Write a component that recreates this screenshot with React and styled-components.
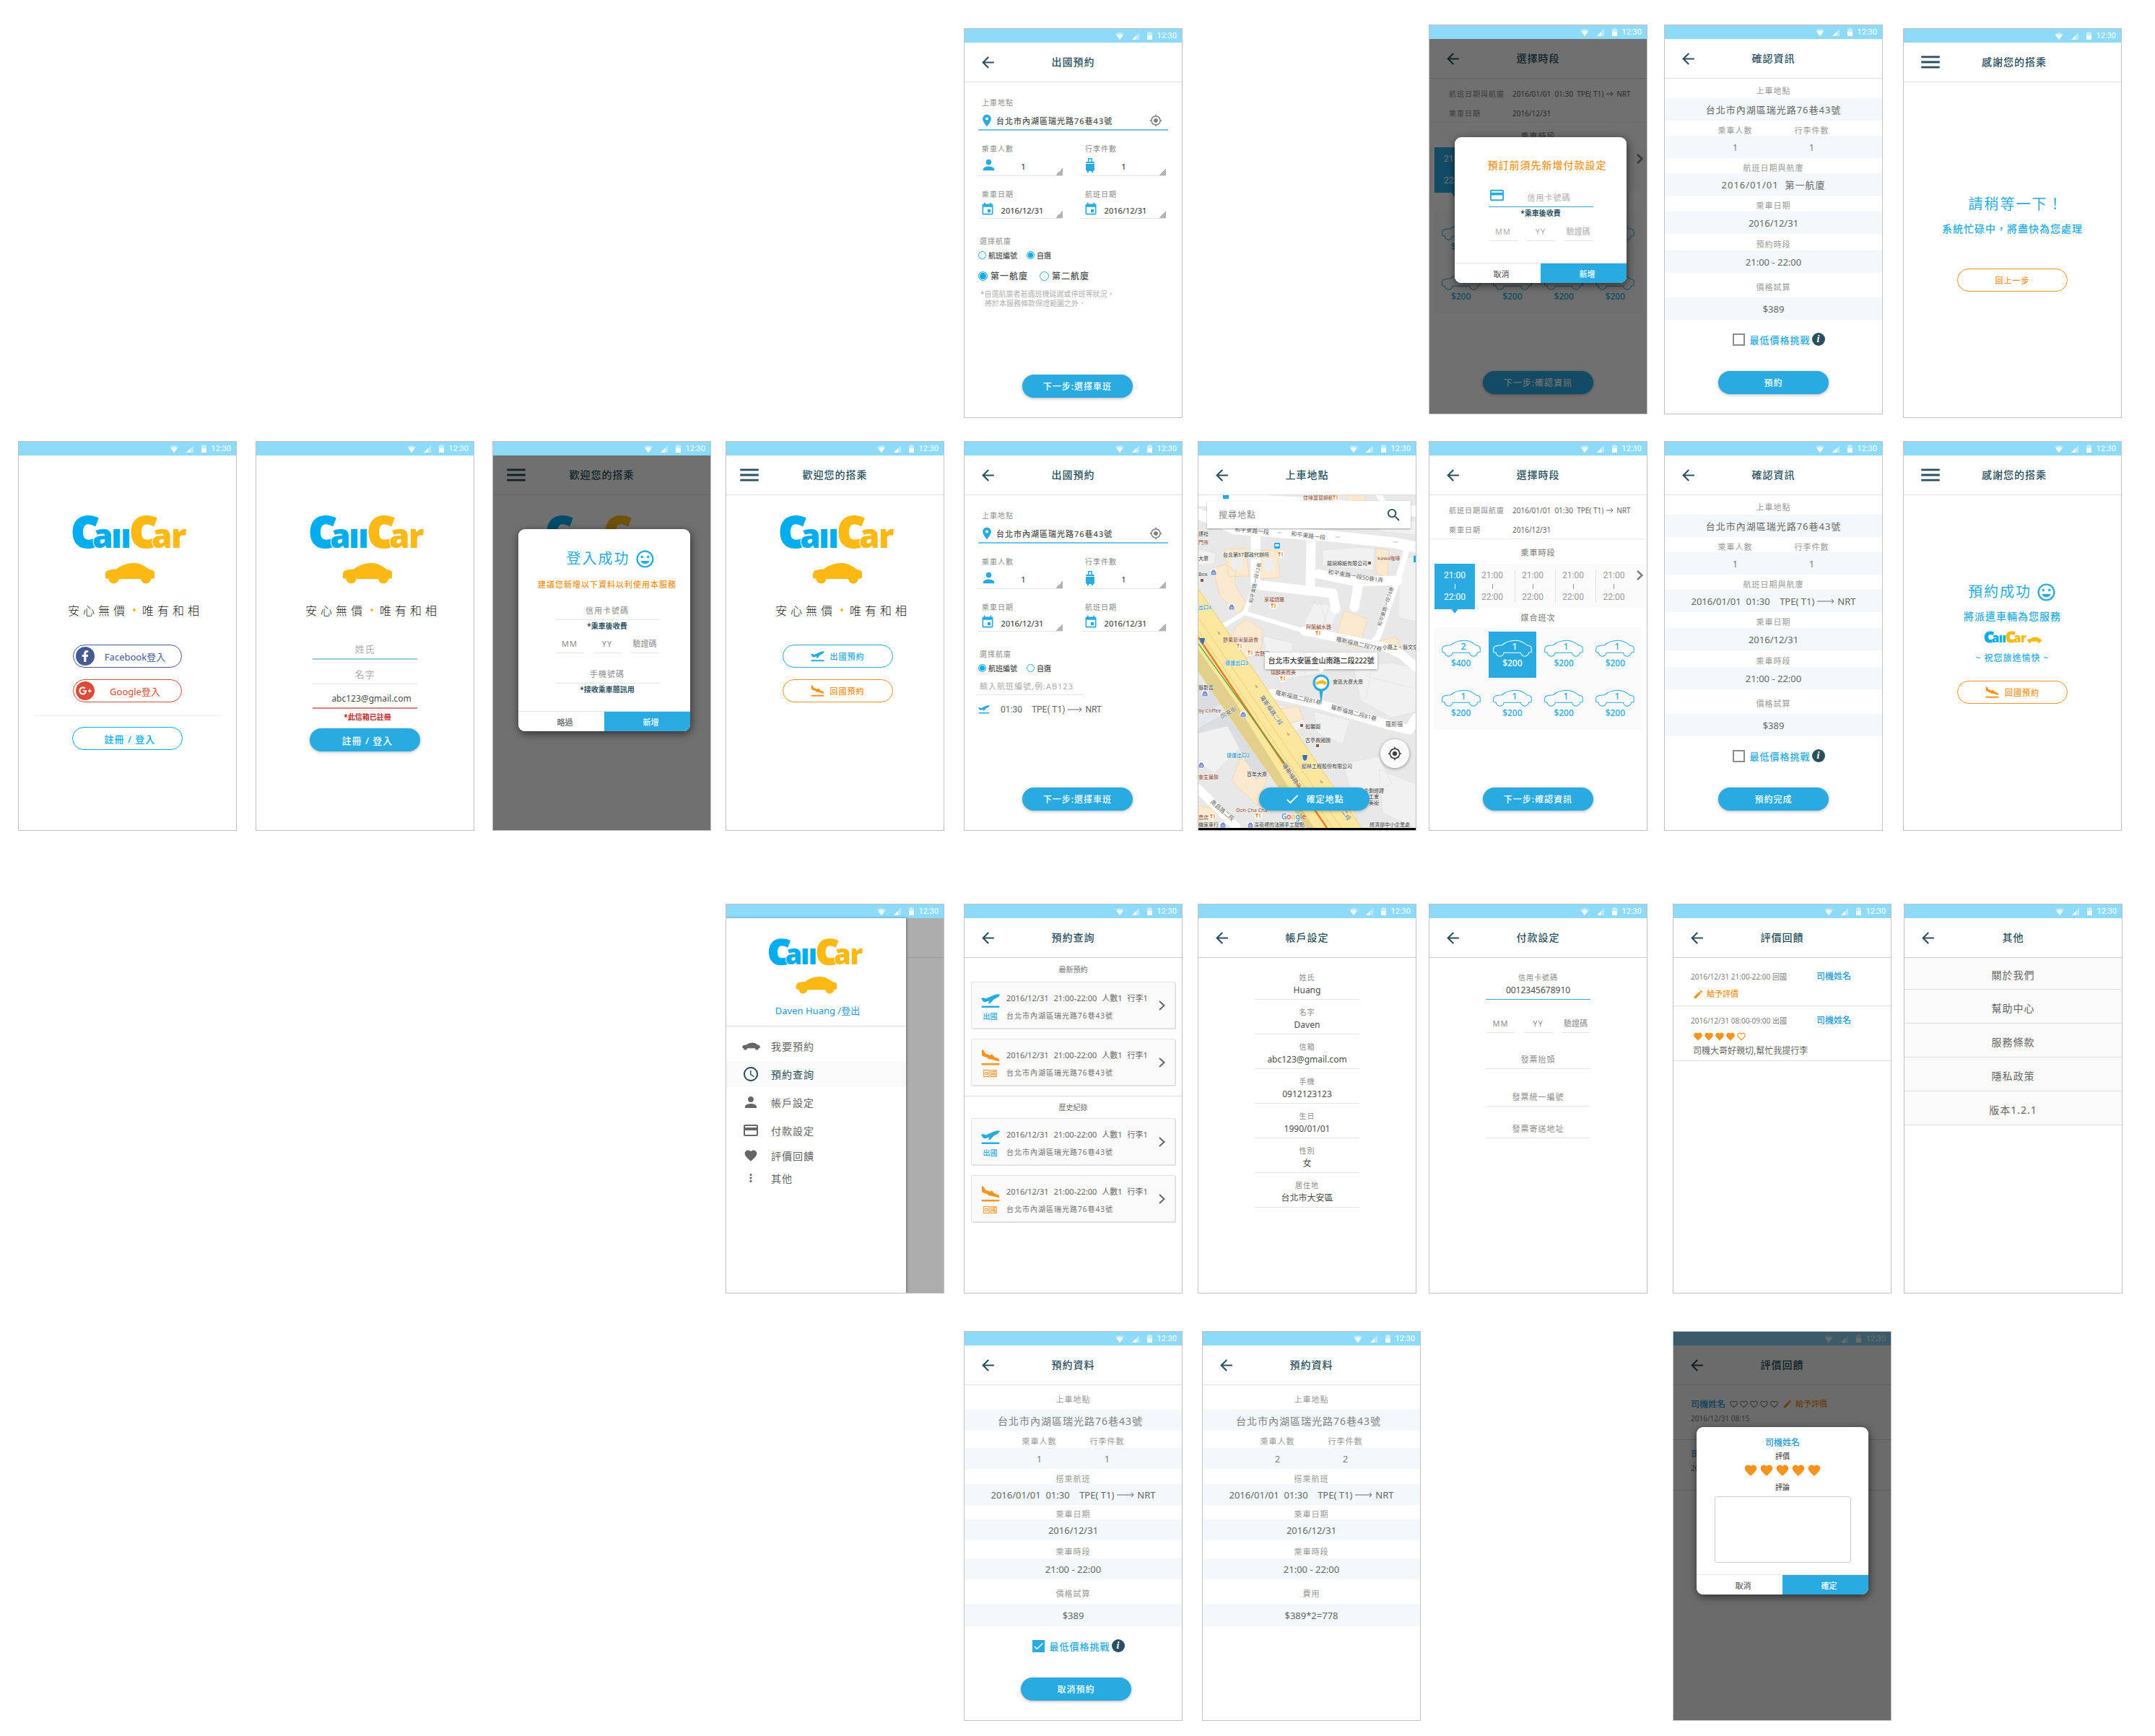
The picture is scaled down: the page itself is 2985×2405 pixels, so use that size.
import React, { useId } from "react";
import styled, { createGlobalStyle, css } from "styled-components";
import {
  MdArrowBack, MdMenu, MdPlace, MdGpsFixed, MdPerson, MdEvent,
  MdCreditCard, MdAccessTime, MdFavorite, MdFavoriteBorder, MdMoreVert, MdEdit, MdSearch,
  MdCheck, MdTagFaces,
} from "react-icons/md";
import { FaFacebookF, FaGooglePlusG } from "react-icons/fa";

const c = {
  blue: "#29abe2", sky: "#8edaf9", logoBlue: "#00aeef", yellow: "#fdb913", orange: "#f7931e",
  navy: "#2a4f60", text: "#4d4d4d", mid: "#666666", label: "#8c8c8c", hint: "#adadad",
  line: "#e4e4e4", frame: "#c2c2c2", band: "#f2f8fb", panel: "#fafafa", link: "#1c9ad6",
};

const Global = createGlobalStyle`
  *, *::before, *::after { box-sizing: border-box; }
  body { margin: 0; background: #ffffff; }
  body, button, input, select, textarea {
    font-family: "Noto Sans", "Noto Sans CJK TC", sans-serif;
    font-size: 12px;
    color: ${c.text};
  }
  button, input, select, textarea { margin: 0; padding: 0; border: 0; background: none; outline: 0; border-radius: 0; }
  button { cursor: pointer; }
  h1, h2, p, ul { margin: 0; padding: 0; font-weight: 400; }
  ul { list-style: none; }
  svg { display: block; flex: none; }
`;

/* ---------- board ---------- */

const Board = styled.main`
  display: flex;
  flex-direction: column;
  padding: 34px 45px 22px 25px;
`;
const Lane = styled.section`
  display: grid;
  grid-template-columns: ${(p) => p.$tracks.map((t) => `minmax(0, ${t}fr)`).join(" ")};
  align-items: start;
  min-height: ${(p) => p.$height}px;
`;
const Phone = styled.article`
  position: relative;
  grid-column: ${(p) => p.$col};
  grid-row: 1;
  display: flex;
  flex-direction: column;
  width: 303px;
  height: 540px;
  margin-top: ${(p) => (p.$low ? 5 : 0)}px;
  border: 1px solid ${c.frame};
  background: #ffffff;
  overflow: hidden;
`;
const Bar = styled.div`
  flex: none;
  display: flex;
  align-items: center;
  justify-content: flex-end;
  gap: 11px;
  height: 19px;
  padding-right: 7px;
  background: ${c.sky};
  color: #ffffff;
  font: 11px/19px Roboto, sans-serif;
`;
const Clock = styled.span`margin-left: -4px;`;
const Header = styled.header`
  flex: none;
  display: grid;
  grid-template-columns: 52px 1fr 52px;
  align-items: center;
  height: 55px;
  padding-left: ${(p) => (p.$inset ? 5 : 0)}px;
  border-bottom: 1px solid ${(p) => (p.$strong ? "#c8c8c8" : "#e0e0e0")};
  color: ${c.navy};
`;
const Nav = styled.button`
  display: flex;
  justify-content: flex-end;
  padding-right: ${(p) => (p.$menu ? 3 : 7)}px;
  color: inherit;
`;
const Title = styled.h1`
  text-align: center;
  font-size: 14px;
  line-height: 20px;
  font-weight: 500;
  letter-spacing: 1px;
`;
const Body = styled.div`
  flex: 1;
  display: flex;
  flex-direction: column;
  padding: 0 ${(p) => p.$x || 0}px;
`;
const Center = styled.div`
  display: flex;
  flex-direction: column;
  align-items: center;
  padding-top: ${(p) => p.$top || 0}px;
  padding-left: ${(p) => p.$left || 0}px;
`;
const Footer = styled.footer`
  margin-top: auto;
  display: flex;
  justify-content: center;
  padding-bottom: 27px;
  padding-left: ${(p) => p.$left || 0}px;
`;

const Status = () => (
  <Bar>
    <svg width="12" height="10" viewBox="0 0 12 10" fill="currentColor">
      <path d="M0 2Q6-2 12 2L6 10Z" opacity=".4" /><path d="M1.6 4.2Q6 1.4 10.4 4.2L6 10Z" />
    </svg>
    <svg width="10" height="10" viewBox="0 0 10 10" fill="currentColor">
      <path d="M0 10L10 0V10Z" opacity=".4" /><path d="M0 10L6 4V10Z" />
    </svg>
    <svg width="7" height="11" viewBox="0 0 7 11" fill="currentColor">
      <path d="M2 0H5V1H7V5H0V1H2Z" opacity=".5" /><path d="M0 5H7V11H0Z" />
    </svg>
    <Clock>12:30</Clock>
  </Bar>
);

function Screen({ col, low, title, menu, strong, inset, children, overlay }) {
  return (
    <Phone $col={col} $low={low}>
      <Status />
      {title && (
        <Header $strong={strong} $inset={inset}>
          <Nav $menu={menu} aria-label={menu ? "選單" : "返回"}>
            {menu ? <MdMenu size={34} /> : <MdArrowBack size={25} />}
          </Nav>
          <Title>{title}</Title>
        </Header>
      )}
      {children}
      {overlay}
    </Phone>
  );
}

/* ---------- shared parts ---------- */

const Pill = styled.button`
  display: flex;
  align-items: center;
  justify-content: center;
  gap: ${(p) => p.$gap || 8}px;
  width: 153px;
  height: 32px;
  padding-left: ${(p) => (p.$size === 13 ? 7 : 0)}px;
  border-radius: 16px;
  font-size: ${(p) => p.$size || 12}px;
  font-weight: 500;
  letter-spacing: 1px;
  ${(p) => p.$line
    ? css`border: 1px solid ${p.$line}; color: ${p.$line}; background: #ffffff;`
    : css`background: ${c.blue}; color: #ffffff; box-shadow: 0 1px 4px rgba(0, 0, 0, 0.3);`}
`;

const Takeoff = ({ width }) => (
  <svg width={width} height={Math.round((width * 20) / 26)} viewBox="0 0 26 20" fill="currentColor">
    <path d="M0 6L3 5L6.500 6.500L18 1.500Q23-.5 26 .5Q25 4 20.500 6L17.500 7.500L12.500 13H10L11.500 9.500L5.500 11.300Q3.500 11.500 2.500 10Z" />
    <rect x=".5" y="16.500" width="25" height="2.600" rx="1" />
  </svg>
);
const Landing = ({ width }) => (
  <svg width={width} height={Math.round((width * 22) / 26)} viewBox="0 0 26 22" fill="currentColor">
    <path d="M1 0L3.500 1L6 5.500L13 8L13.500 6.500L16 7.500L18.500 10.500L23 12Q26 13.500 25 16.500L14 13.500L10.500 13.500L9 11.500L2 9Q.8 8 .9 6Z" />
    <rect x=".5" y="19" width="25" height="2.600" rx="1" />
  </svg>
);

const CAR = "M3 12Q6 10 16 9.5Q26 1 41 1Q51 1 62 10Q69 10.500 69 15L69 22L64 23A7 6.500 0 0 1 50 23L19.500 23A7 6.500 0 0 1 5.500 23L1 22Q0 14 3 12Z";
const Car = ({ width, color }) => (
  <svg width={width} height={Math.round(width * 0.43)} viewBox="0 0 70 30" fill={color}><path d={CAR} /></svg>
);

const LogoSvg = styled.svg`overflow: visible;`;
const LogoText = styled.text`
  font-family: "Noto Sans", "Open Sans", sans-serif;
  font-weight: 900;
  font-size: ${(p) => (p.$cap ? 58 : 46)}px;
  paint-order: stroke;
  stroke: ${(p) => p.$edge || "#ffffff"};
  stroke-width: ${(p) => (p.$edge ? 3 : 2)}px;
`;
const Logo = ({ width }) => (
  <LogoSvg width={width} height={Math.round((width * 46) / 158)} viewBox="0 0 158 46" role="img" aria-label="CallCar">
    <g fill={c.logoBlue}>
      <LogoText x="-2" y="43" $cap $edge={c.logoBlue}>C</LogoText>
      <LogoText x="27" y="44">a</LogoText>
      <LogoText x="53" y="44">ı</LogoText>
      <LogoText x="66" y="44">ı</LogoText>
    </g>
    <g fill={c.yellow}>
      <LogoText x="79" y="43" $cap $edge={c.yellow}>C</LogoText>
      <LogoText x="109" y="44">a</LogoText>
      <LogoText x="136" y="44">r</LogoText>
    </g>
  </LogoSvg>
);

const BrandBox = styled.div`
  display: flex;
  flex-direction: column;
  align-items: center;
  padding: ${(p) => p.$top}px 0 0 7px;
`;
const BrandCar = styled.div`margin-top: 18px;`;
const Tagline = styled.p`
  display: flex;
  align-items: center;
  gap: 6px;
  margin-top: 24px;
  padding-left: 15px;
  font-family: "Noto Sans CJK TC", sans-serif;
  font-size: 16px;
  line-height: 24px;
  font-weight: 300;
  letter-spacing: 5px;
  color: #1a1a1a;
`;
const Dot = styled.i`
  width: 4px;
  height: 4px;
  margin-right: 3px;
  border-radius: 2px;
  background: ${c.yellow};
`;
const Brand = ({ top }) => (
  <BrandBox $top={top}>
    <Logo width={158} />
    <BrandCar><Car width={70} color={c.yellow} /></BrandCar>
    <Tagline><span>安心無價</span><Dot /><span>唯有和相</span></Tagline>
  </BrandBox>
);

const Shade = styled.div`
  position: absolute;
  inset: ${(p) => (p.$full ? 0 : 19)}px 0 0 0;
  padding: ${(p) => p.$top}px 0 0 ${(p) => p.$left || 35}px;
  background: rgba(0, 0, 0, ${(p) => (p.$full ? 0.58 : 0.56)});
`;
const Dialog = styled.div`
  display: flex;
  flex-direction: column;
  width: 238px;
  height: ${(p) => p.$height}px;
  border-radius: 9px;
  background: #ffffff;
  box-shadow: 1px 3px 12px rgba(0, 0, 0, 0.6);
  overflow: hidden;
`;
const DialogBody = styled.div`
  flex: 1;
  display: flex;
  flex-direction: column;
  align-items: center;
  padding-left: ${(p) => p.$left || 0}px;
`;
const DialogFoot = styled.div`
  display: grid;
  grid-template-columns: 1fr 1fr;
  height: 28px;
  border-top: 1px solid ${c.line};
`;
const Choice = styled.button`
  padding-left: 10px;
  font-size: 11px;
  font-weight: 500;
  color: ${(p) => (p.$main ? "#ffffff" : c.mid)};
  background: ${(p) => (p.$main ? c.blue : "#ffffff")};
`;
const Warn = styled.h2`
  margin-top: ${(p) => p.$top}px;
  padding-left: ${(p) => p.$left || 0}px;
  white-space: nowrap;
  font-size: ${(p) => p.$size}px;
  line-height: 20px;
  font-weight: 500;
  letter-spacing: 1px;
  color: ${c.orange};
`;
const Note = styled.p`
  font-size: 10px;
  line-height: 16px;
  font-weight: 700;
  color: ${c.navy};
`;
const Field = styled.label`
  display: flex;
  align-items: flex-end;
  width: ${(p) => p.$w || 145}px;
  height: ${(p) => p.$h || 24}px;
  margin-top: ${(p) => p.$top || 0}px;
  padding-bottom: 4px;
  border-bottom: ${(p) => p.$thick || 1}px solid ${(p) => p.$line || c.line};
  color: ${c.blue};
`;
const Input = styled.input`
  flex: 1;
  width: 100%;
  min-width: 0;
  height: 18px;
  padding-left: ${(p) => p.$left || 0}px;
  text-align: ${(p) => p.$align || "center"};
  font-size: ${(p) => p.$size || 11}px;
  letter-spacing: ${(p) => (p.$plain ? 0 : 1)}px;
  color: ${c.text};
  &::placeholder { color: ${(p) => (p.$pale ? c.hint : c.label)}; opacity: 1; }
`;
const Trio = styled.div`
  display: grid;
  grid-template-columns: 39px 39px 39px;
  justify-content: space-between;
  width: 143px;
  margin-top: ${(p) => p.$top}px;
`;
const CardTrio = ({ top, pale, h }) => (
  <Trio $top={top}>
    {["MM", "YY", "驗證碼"].map((t) => (
      <Field key={t} $w={39} $h={h}><Input aria-label={t} placeholder={t} $pale={pale} $plain={t.length > 2} /></Field>
    ))}
  </Trio>
);
const Big = styled.h2`
  display: flex;
  align-items: center;
  gap: 6px;
  padding-left: ${(p) => (p.$inset ? 10 : 0)}px;
  white-space: nowrap;
  font-size: 20px;
  line-height: 30px;
  letter-spacing: 2px;
  color: ${c.blue};
`;

/* ---------- booking form ---------- */

const Label = styled.span`
  display: block;
  margin-top: ${(p) => p.$top || 0}px;
  padding-left: ${(p) => (p.$flush ? 2 : 5)}px;
  font-size: 10px;
  line-height: 16px;
  letter-spacing: 1px;
  color: ${c.label};
`;
const Address = styled.label`
  display: flex;
  align-items: center;
  gap: 3px;
  height: 31px;
  padding: 4px 8px 0 2px;
  border-bottom: 2px solid #6fc3e8;
  color: ${c.blue};
`;
const AddressInput = styled(Input)`
  text-align: left;
  font-weight: 500;
`;
const Gps = styled.span`color: #808080;`;
const BlueIcon = styled.span`color: ${c.blue};`;
const Pair = styled.div`
  display: grid;
  grid-template-columns: 1fr 1fr;
  gap: 26px;
  padding-right: 3px;
`;
const Picker = styled.label`
  display: flex;
  align-items: center;
  height: ${(p) => p.$h}px;
  padding-left: ${(p) => p.$left || 3}px;
  border-bottom: 1px solid ${c.line};
  background: linear-gradient(135deg, transparent 50%, #b3b3b3 50%) right bottom / 10px 10px no-repeat;
  color: ${c.blue};
`;
const Select = styled.select`
  flex: 1;
  appearance: none;
  padding: 4px 18px 0 0;
  text-align-last: center;
  font-size: 11px;
  line-height: 18px;
  font-weight: 500;
`;
const Radios = styled.div`
  display: flex;
  align-items: center;
  gap: ${(p) => p.$gap}px;
  height: 20px;
  margin-top: ${(p) => p.$top}px;
`;
const RadioLabel = styled.label`
  display: flex;
  align-items: center;
  gap: ${(p) => (p.$big ? 4 : 3)}px;
  font-size: ${(p) => (p.$big ? 12 : 10)}px;
  font-weight: 500;
  letter-spacing: ${(p) => (p.$big ? 1 : 0)}px;
`;
const Radio = styled.input`
  appearance: none;
  width: ${(p) => (p.$big ? 13 : 11)}px;
  height: ${(p) => (p.$big ? 13 : 11)}px;
  border: 1px solid ${c.blue};
  border-radius: 50%;
  &:checked { background: ${c.logoBlue}; box-shadow: inset 0 0 0 1px #ffffff; }
`;
const Small = styled.p`
  margin-top: 9px;
  padding-left: 9px;
  text-indent: -6px;
  font-size: 10px;
  line-height: 13px;
  color: #b0b0b0;
`;
const SmallNext = styled.span`display: block; text-indent: 0;`;
const Flight = styled.div`
  display: flex;
  align-items: center;
  height: 20px;
  margin-top: 10px;
  font-family: Roboto, sans-serif;
  font-size: 12px;
  color: ${c.mid};
`;
const FlightTime = styled.span`padding: 0 13px 0 15px;`;
const Route = styled.span`
  display: inline-flex;
  align-items: center;
  gap: 4px;
  white-space: nowrap;
`;
const Arrow = ({ w = 20 }) => (
  <svg width={w} height="8" viewBox={`0 0 ${w} 8`} fill="none" stroke="currentColor"><path d={`M0 4H${w - 1}M${w - 4} 1L${w - 1} 4L${w - 4} 7`} /></svg>
);
const FlightInput = styled(Input)`
  flex: none;
  width: 148px;
  height: 21px;
  margin: 7px 0 0 -3px;
  padding: 0 0 3px 5px;
  text-align: left;
  border-bottom: 1px solid ${c.line};
`;
const Suitcase = () => (
  <svg width="12" height="20" viewBox="0 0 12 20" fill="currentColor">
    <path d="M3 0H9V5H7.500V1.500H4.500V5H3Z" /><rect y="5" width="12" height="2" rx="1" />
    <path d="M0 8H12V16Q12 18 10 18H2Q0 18 0 16Z" /><path d="M2 18H4V20H2ZM8 18H10V20H8Z" />
  </svg>
);

function BookingForm({ custom }) {
  const id = useId();
  return (
    <Body $x={19}>
      <Label $top={20}>上車地點</Label>
      <Address>
        <MdPlace size={20} />
        <AddressInput aria-label="上車地點" defaultValue="台北市內湖區瑞光路76巷43號" />
        <Gps><MdGpsFixed size={18} /></Gps>
      </Address>
      <Pair>
        <div>
          <Label $top={17}>乘車人數</Label>
          <Picker $h={30}><MdPerson size={23} /><Select aria-label="乘車人數"><option>1</option></Select></Picker>
        </div>
        <div>
          <Label $top={17}>行李件數</Label>
          <Picker $h={30} $left={6}><Suitcase /><Select aria-label="行李件數"><option>1</option></Select></Picker>
        </div>
      </Pair>
      <Pair>
        <div>
          <Label $top={17}>乘車日期</Label>
          <Picker $h={26}><MdEvent size={20} /><Select aria-label="乘車日期"><option>2016/12/31</option></Select></Picker>
        </div>
        <div>
          <Label $top={17}>航班日期</Label>
          <Picker $h={26}><MdEvent size={20} /><Select aria-label="航班日期"><option>2016/12/31</option></Select></Picker>
        </div>
      </Pair>
      <Label $top={23} $flush>選擇航廈</Label>
      <Radios $top={1} $gap={13}>
        <RadioLabel><Radio type="radio" name={`${id}a`} defaultChecked={!custom} />航班編號</RadioLabel>
        <RadioLabel><Radio type="radio" name={`${id}a`} defaultChecked={custom} />自選</RadioLabel>
      </Radios>
      {custom ? (
        <>
          <Radios $top={9} $gap={16}>
            <RadioLabel $big><Radio $big type="radio" name={`${id}b`} defaultChecked />第一航廈</RadioLabel>
            <RadioLabel $big><Radio $big type="radio" name={`${id}b`} />第二航廈</RadioLabel>
          </Radios>
          <Small>*自選航廈者若遇班機延遲或停班等狀況，<SmallNext>將於本服務條款保證範圍之外．</SmallNext></Small>
        </>
      ) : (
        <>
          <FlightInput aria-label="航班編號" placeholder="輸入航班編號,例:AB123" $pale />
          <Flight>
            <BlueIcon><Takeoff width={16} /></BlueIcon>
            <FlightTime>01:30</FlightTime>
            <Route>TPE( T1)<Arrow />NRT</Route>
          </Flight>
        </>
      )}
      <Footer $left={12}><Pill>下一步:選擇車班</Pill></Footer>
    </Body>
  );
}

/* ---------- slots ---------- */

const Facts = styled.dl`
  display: grid;
  grid-template-columns: 88px 1fr;
  row-gap: 7px;
  height: 61px;
  margin: 0;
  padding: 13px 0 0 27px;
  border-bottom: 1px solid #eeeeee;
  font-size: 10px;
  line-height: 16px;
`;
const FactName = styled.dt`letter-spacing: 1px; color: ${c.label};`;
const FactValue = styled.dd`margin: 0; color: ${c.mid};`;
const Section = styled.h2`
  height: ${(p) => p.$h}px;
  padding-top: ${(p) => p.$pad || 0}px;
  text-align: center;
  font-size: 11px;
  line-height: ${(p) => p.$h - (p.$pad || 0)}px;
  font-weight: 500;
  letter-spacing: 1px;
  color: ${c.label};
`;
const Strip = styled.div`
  display: grid;
  grid-template-columns: repeat(5, 56px) 1fr;
  height: 61px;
  padding-left: 7px;
  background: ${c.panel};
`;
const Slot = styled.button`
  position: relative;
  display: flex;
  flex-direction: column;
  align-items: center;
  justify-content: center;
  margin: ${(p) => (p.$on ? 0 : 9)}px 0;
  padding-right: ${(p) => (p.$on ? 0 : 7)}px;
  border-right: ${(p) => (p.$edge ? 1 : 0)}px solid ${c.line};
  background: ${(p) => (p.$on ? c.blue : "transparent")};
  color: ${(p) => (p.$on ? "#ffffff" : "#999999")};
  font-family: Roboto, sans-serif;
  font-size: 12px;
  line-height: 15px;
  &::after {
    content: "";
    display: ${(p) => (p.$on ? "block" : "none")};
    position: absolute;
    top: 61px;
    border: solid transparent;
    border-width: 8px 6px 0;
    border-top-color: ${c.blue};
  }
`;
const Tick = styled.i`width: 1px; height: 7px; margin: 4px 0; background: currentColor;`;
const More = styled.button`
  display: flex;
  align-items: flex-start;
  justify-content: flex-start;
  padding-top: 9px;
  color: #808080;
`;
const Chevron = ({ w = 9, s = 2.5 }) => (
  <svg width={w} height="14" viewBox="0 0 9 14" fill="none" stroke="currentColor" strokeWidth={s}><path d="M1 1L7.500 7L1 13" /></svg>
);
const Cars = styled.div`
  display: grid;
  grid-template-columns: repeat(4, 1fr);
  grid-auto-rows: 64px;
  gap: 5px 6px;
  height: 142px;
  margin: 0 7px;
  padding: 6px 4px 0;
  background: ${c.panel};
`;
const CarCell = styled.button`
  display: flex;
  flex-direction: column;
  align-items: center;
  padding-top: 11px;
  font-size: 12px;
  line-height: 18px;
  font-weight: 500;
  color: ${(p) => (p.$on ? "#ffffff" : c.blue)};
  background: ${(p) => (p.$on ? c.blue : "transparent")};
`;
const SvgLabel = styled.text`
  font-family: "Noto Sans", sans-serif;
  font-weight: 500;
  font-size: 16px;
  fill: currentColor;
`;
const cars = [["2", "$400", false], ["1", "$200", true], ["1", "$200"], ["1", "$200"], ["1", "$200"], ["1", "$200"], ["1", "$200"], ["1", "$200"]];

const Slots = () => (
  <Body>
    <Facts>
      <FactName>航班日期與航廈</FactName>
      <FactValue><Route>2016/01/01&nbsp; 01:30&nbsp; TPE( T1) <Arrow w={10} /> NRT</Route></FactValue>
      <FactName>乘車日期</FactName><FactValue>2016/12/31</FactValue>
    </Facts>
    <Section $h={34} $pad={4}>乘車時段</Section>
    <Strip>
      {[0, 1, 2, 3, 4].map((i) => (
        <Slot key={i} $on={i === 0} $edge={i > 0 && i < 4}>21:00<Tick />22:00</Slot>
      ))}
      <More aria-label="更多時段"><Chevron /></More>
    </Strip>
    <Section $h={27}>媒合班次</Section>
    <Cars>
      {cars.map(([n, price, on], i) => (
        <CarCell key={i} $on={on}>
          <svg width="54" height="24" viewBox="0 0 70 30" fill="none" stroke="currentColor" strokeWidth="1.3">
            <path d={CAR} /><SvgLabel x="39" y="18" textAnchor="middle" stroke="none">{n}</SvgLabel>
          </svg>
          {price}
        </CarCell>
      ))}
    </Cars>
    <Footer><Pill>下一步:確認資訊</Pill></Footer>
  </Body>
);

/* ---------- booking summary ---------- */

const SumLabel = styled.div`
  display: flex;
  justify-content: center;
  align-items: center;
  height: ${(p) => p.$h}px;
  padding-top: 4px;
  font-size: 11px;
  letter-spacing: 1px;
  color: #999999;
`;
const SumBand = styled.div`
  display: flex;
  justify-content: center;
  align-items: center;
  height: ${(p) => p.$h}px;
  padding-right: ${(p) => (p.$large ? 8 : 0)}px;
  background: ${c.band};
  font-size: ${(p) => (p.$large ? 14 : 13)}px;
  letter-spacing: ${(p) => (p.$wide ? 1 : 0)}px;
  color: ${(p) => (p.$soft ? "#808080" : c.mid)};
  white-space: pre;
`;
const Half = styled.span`
  width: ${(p) => p.$w}px;
  text-align: center;
`;
const Challenge = styled.div`
  display: flex;
  align-items: center;
  justify-content: center;
  gap: 6px;
  height: 20px;
  margin: 17px 0 0 15px;
`;
const CheckLabel = styled.label`
  display: flex;
  align-items: center;
  gap: 6px;
  font-size: 13px;
  font-weight: 500;
  letter-spacing: 1px;
  color: ${c.blue};
`;
const Check = styled.input`
  appearance: none;
  width: 17px;
  height: 17px;
  border: 2px solid #8c8c8c;
  &:checked {
    border: 0;
    background: ${c.blue};
  }
`;
const CheckWrap = styled.span`display: grid; > * { grid-area: 1 / 1; } color: #ffffff;`;
const Info = styled.button`
  width: 18px;
  height: 18px;
  margin-left: -4px;
  border-radius: 50%;
  background: ${c.navy};
  color: #ffffff;
  font: italic 700 14px/18px "Liberation Serif", serif;
`;
const flightValue = <>2016/01/01  01:30    <Route>TPE( T1)<Arrow w={24} />NRT</Route></>;

function Summary({ heights, bandH, half, people = "1", flightLabel, flight, slotLabel, costLabel = "價格試算", cost = "$389", past, checked, action }) {
  const [a, b, d, e, f, g] = heights;
  return (
    <Body>
      <SumLabel $h={a}>上車地點</SumLabel>
      <SumBand $h={bandH} $wide $large={past} $soft={past}>台北市內湖區瑞光路76巷43號</SumBand>
      <SumLabel $h={b}><Half $w={half}>乘車人數</Half><Half $w={half}>行李件數</Half></SumLabel>
      <SumBand $h={bandH} $soft><Half $w={half}>{people}</Half><Half $w={half}>{people}</Half></SumBand>
      <SumLabel $h={d}>{flightLabel}</SumLabel>
      <SumBand $h={bandH} $wide={!!flight}>{flight || flightValue}</SumBand>
      <SumLabel $h={e}>乘車日期</SumLabel>
      <SumBand $h={bandH}>2016/12/31</SumBand>
      <SumLabel $h={f}>{slotLabel}</SumLabel>
      <SumBand $h={bandH}>21:00 - 22:00</SumBand>
      <SumLabel $h={g}>{costLabel}</SumLabel>
      <SumBand $h={31}>{cost}</SumBand>
      {action && (
        <>
          <Challenge>
            <CheckLabel>
              <CheckWrap><Check type="checkbox" defaultChecked={checked} />{checked && <MdCheck size={17} />}</CheckWrap>
              最低價格挑戰
            </CheckLabel>
            <Info aria-label="說明">i</Info>
          </Challenge>
          <Footer $left={past ? 8 : 0}><Pill>{action}</Pill></Footer>
        </>
      )}
    </Body>
  );
}
const confirmProps = { heights: [27, 21, 21, 22, 23, 34], bandH: 31, half: 106, flightLabel: "航班日期與航廈" };
const detailProps = { heights: [34, 24, 21, 20, 25, 34], bandH: 29, half: 94, flightLabel: "搭乘航班", slotLabel: "乘車時段", past: true };

/* ---------- messages ---------- */

const Line = styled.p`
  margin-top: ${(p) => p.$top}px;
  white-space: nowrap;
  font-size: ${(p) => p.$size}px;
  line-height: 20px;
  font-weight: 500;
  letter-spacing: 1px;
  color: ${c.blue};
`;
const Gap = styled.div`margin-top: ${(p) => p.$h}px;`;
const MiniLogo = styled.div`
  display: flex;
  align-items: flex-end;
  margin-top: 10px;
`;

/* ---------- login ---------- */

const Social = styled.button`
  display: grid;
  grid-template-columns: 26px 1fr 8px;
  align-items: center;
  width: 151px;
  height: 32px;
  margin-top: ${(p) => p.$top}px;
  padding-left: 3px;
  border: 1px solid ${(p) => p.$tone};
  border-radius: 16px;
  color: ${(p) => p.$tone};
  font-size: 13px;
`;
const Badge = styled.span`
  display: grid;
  place-items: center;
  width: 26px;
  height: 26px;
  border-radius: 50%;
  background: ${(p) => p.$tone};
  color: #ffffff;
`;
const Rule = styled.hr`
  width: 258px;
  height: 1px;
  margin: 18px 0 15px;
  border: 0;
  background: #eeeeee;
`;
const ErrorText = styled.p`
  margin: 3px 0 8px;
  padding-left: 7px;
  font-size: 10px;
  line-height: 16px;
  font-weight: 700;
  color: #c1272d;
`;

/* ---------- drawer ---------- */

const DrawerArea = styled.div`
  flex: 1;
  background: #adadad linear-gradient(#999999, #999999) 0 54px / 100% 1px no-repeat;
`;
const Drawer = styled.nav`
  width: 249px;
  height: 100%;
  background: #ffffff;
  box-shadow: 1px 0 3px rgba(0, 0, 0, 0.4);
`;
const DrawerTop = styled.div`
  display: flex;
  flex-direction: column;
  align-items: center;
  height: 150px;
  padding-top: 28px;
  border-bottom: 1px solid #d9d9d9;
`;
const Account = styled.a`
  margin-top: 13px;
  padding-left: 4px;
  font-size: 13px;
  line-height: 20px;
  text-decoration: none;
  color: ${c.link};
`;
const Menu = styled.ul`
  display: flex;
  flex-direction: column;
  gap: 3px;
  padding-top: 9px;
`;
const MenuLink = styled.a`
  display: flex;
  align-items: center;
  gap: 15px;
  height: ${(p) => p.$h}px;
  padding-left: 21px;
  background: ${(p) => (p.$on ? c.panel : "transparent")};
  color: ${(p) => (p.$on ? c.navy : c.mid)};
  font-size: 14px;
  letter-spacing: 1px;
  text-decoration: none;
`;
const IconSlot = styled.span`display: grid; place-items: center; width: 26px;`;
const menuItems = [
  ["我要預約", <Car width={25} color="#666666" />, 36],
  ["預約查詢", <MdAccessTime size={24} />, 36, true],
  ["帳戶設定", <MdPerson size={24} />, 36],
  ["付款設定", <MdCreditCard size={24} />, 36],
  ["評價回饋", <MdFavorite size={20} />, 28],
  ["其他", <MdMoreVert size={18} />, 28],
];

/* ---------- booking list ---------- */

const Caption = styled.h2`
  text-align: center;
  font-size: 10px;
  line-height: ${(p) => p.$h}px;
  color: #737373;
  ${(p) => p.$ruled && css`margin-top: 14px; border-top: 1px solid #d9d9d9;`}
`;
const Trip = styled.a`
  display: grid;
  grid-template-columns: 48px 1fr 22px;
  align-items: center;
  height: 65px;
  margin: 0 9px ${(p) => (p.$last ? 0 : 14)}px 9px;
  border: 1px solid ${c.line};
  border-radius: 2px;
  background: ${c.panel};
  box-shadow: 1px 1px 1px rgba(0, 0, 0, 0.14);
  text-decoration: none;
  color: ${c.mid};
`;
const TripKind = styled.span`
  display: flex;
  flex-direction: column;
  align-items: center;
  justify-content: flex-end;
  gap: 4px;
  height: 44px;
  padding-left: 3px;
  font-size: 10px;
  line-height: 14px;
  font-weight: 500;
  color: ${(p) => (p.$out ? c.blue : c.orange)};
`;
const TripText = styled.span`
  display: grid;
  gap: 8px;
  padding-top: 4px;
  font-size: 11px;
  line-height: 16px;
  white-space: nowrap;
`;
const TripAddress = styled.span`font-size: 10px; letter-spacing: 1px; color: #737373;`;
const Meta = styled.span`display: flex; gap: 7px;`;
const TripCard = ({ out, last }) => (
  <Trip href="#trip" $last={last}>
    <TripKind $out={out}>{out ? <Takeoff width={26} /> : <Landing width={26} />}{out ? "出國" : "回國"}</TripKind>
    <TripText>
      <Meta><span>2016/12/31</span><span>21:00-22:00</span><span>人數1</span><span>行李1</span></Meta>
      <TripAddress>台北市內湖區瑞光路76巷43號</TripAddress>
    </TripText>
    <Chevron w={9} s={2} />
  </Trip>
);

/* ---------- account & payment ---------- */

const Entry = styled.label`
  display: flex;
  flex-direction: column;
  align-items: center;
  justify-content: flex-end;
  width: 145px;
  height: ${(p) => p.$h || 48}px;
  padding-bottom: 4px;
  border-bottom: 1px solid ${(p) => p.$line || c.line};
  font-size: 10px;
  line-height: 16px;
  letter-spacing: 1px;
  color: ${c.label};
`;
const EntryInput = styled(Input)`flex: none;`;
const account = [["姓氏", "Huang"], ["名字", "Daven"], ["信箱", "abc123@gmail.com"], ["手機", "0912123123"], ["生日", "1990/01/01"], ["性別", "女"], ["居住地", "台北市大安區"]];

/* ---------- reviews ---------- */

const Review = styled.section`
  height: ${(p) => p.$h}px;
  padding: ${(p) => p.$top}px 0 0 24px;
  border-bottom: 1px solid #dcdcdc;
`;
const ReviewHead = styled.div`
  display: grid;
  grid-template-columns: 113px 61px 1fr;
  align-items: center;
  font-size: 10px;
  line-height: 18px;
  white-space: nowrap;
  color: #808080;
`;
const Driver = styled.span`font-size: 12px; font-weight: 500; color: ${c.link};`;
const Give = styled.button`
  display: flex;
  align-items: center;
  gap: 4px;
  margin: ${(p) => (p.$inline ? 0 : "6px 0 0 3px")};
  font-size: 11px;
  line-height: 18px;
  font-weight: 500;
  color: ${c.orange};
`;
const Hearts = styled.div`
  display: flex;
  gap: ${(p) => p.$gap || 1}px;
  margin: ${(p) => (p.$flush ? 0 : "6px 0 0 3px")};
  color: ${(p) => p.$tone || c.orange};
`;
const Comment = styled.p`
  margin: 3px 0 0 3px;
  font-size: 12px;
  line-height: 20px;
  color: ${c.mid};
`;
const OldHead = styled.div`
  display: flex;
  align-items: center;
  gap: 5px;
`;
const Stamp = styled.p`font-size: 10px; line-height: 22px; color: #808080;`;
const Area = styled.textarea`
  width: 189px;
  height: 92px;
  border: 1px solid #cccccc;
  border-radius: 3px;
  resize: none;
`;
const Tiny = styled.p`
  font-size: 10px;
  line-height: ${(p) => p.$h}px;
  font-weight: 500;
`;

/* ---------- others ---------- */

const ListLink = styled.a`
  display: flex;
  align-items: center;
  justify-content: center;
  height: ${(p) => (p.$first ? 44 : 47)}px;
  padding-top: 3px;
  border-bottom: 1px solid #dedede;
  background: ${c.panel};
  color: ${c.mid};
  font-size: 14px;
  letter-spacing: 1px;
  text-decoration: none;
`;

/* ---------- map ---------- */

const MapBox = styled.div`
  position: relative;
  flex: 1;
  border-bottom: 3px solid #000000;
  background: #e8e8e8;
  overflow: hidden;
`;
const MapSvg = styled.svg`width: 100%; height: 100%;`;
const MapText = styled.text`
  font-family: "Noto Sans", "Noto Sans CJK TC", sans-serif;
  font-size: ${(p) => p.$size || 7}px;
  font-weight: ${(p) => p.$weight || 400};
  fill: ${(p) => p.$fill || "#666666"};
  paint-order: stroke;
  stroke: rgba(255, 255, 255, 0.7);
  stroke-width: 1px;
`;
const Search = styled.label`
  position: absolute;
  top: 8px;
  left: 12px;
  right: 7px;
  display: flex;
  align-items: center;
  height: 38px;
  padding: 0 12px 0 16px;
  background: #ffffff;
  box-shadow: 0 1px 2px rgba(0, 0, 0, 0.35);
  color: ${c.navy};
`;
const Callout = styled.div`
  position: absolute;
  top: 218px;
  left: 92px;
  display: flex;
  justify-content: center;
  width: 156px;
  background: #ffffff;
  box-shadow: 0 1px 3px rgba(0, 0, 0, 0.35);
  font-size: 10px;
  line-height: 23px;
  font-weight: 500;
  color: #333333;
  white-space: nowrap;
`;
const PinSvg = styled.svg`
  position: absolute;
  top: 240px;
  left: 157px;
`;
const Locate = styled.button`
  position: absolute;
  top: 338px;
  left: 252px;
  display: grid;
  place-items: center;
  width: 40px;
  height: 40px;
  border-radius: 50%;
  background: #fafafa;
  box-shadow: 0 1px 4px rgba(0, 0, 0, 0.4);
  color: #404040;
`;
const MapAction = styled.div`
  position: absolute;
  left: 0;
  right: 0;
  bottom: 24px;
  display: flex;
  justify-content: center;
  padding-left: 20px;
`;
const brown = "#9c5b4c", dark = "#555555", station = "#3a9bc9";
const places = [
  [145, 6, "佳味薑蔔師餅", brown], [0, 56, "譯社", dark], [0, 68, "門市", brown], [0, 90, "大廈", dark],
  [34, 85, "台北第57郵政代辦所", dark], [178, 97, "龍琬棉紙有限公司", dark], [248, 90, "kawa咖啡", brown],
  [0, 112, "Box", dark], [91, 147, "家福燒臘", brown], [149, 185, "阿蘭鹹水雞", brown], [0, 158, "出口4", station],
  [34, 203, "野果新米蘭蔬食", brown], [78, 222, "吉野家", brown], [255, 213, "小路上。藝文空間", dark],
  [37, 235, "捷運出口3", station], [100, 248, "瑞麟美而美", brown], [186, 261, "安區大廈大廈", dark],
  [0, 269, "藝影音", dark], [0, 301, "by Coffee", brown], [148, 323, "知馨園", dark], [148, 342, "古亭救國團", dark],
  [39, 363, "捷運出口2", station], [143, 378, "紹林工程股份有限公司", dark], [67, 389, "百年大廈", dark],
  [0, 393, "安生藥房", brown], [208, 412, "台灣省企劃經理", dark], [236, 420, "工會", dark], [236, 429, "美術", dark],
  [52, 439, "Ooh Cha Cha", brown], [0, 449, "賣店", brown], [0, 459, "機家車行", dark],
  [77, 459, "深夜裡的法國手工甜點", dark], [237, 459, "經濟部中小企業處", dark],
];
const streets = [
  [50, 50, 5, "和平東路一段", 8], [128, 56, 7, "和平東路一段", 8], [179, 109, 9, "和平東路一段50巷1弄", 8],
  [75, 150, -78, "和平東路一段12巷", 7], [253, 182, -72, "和平東路一段74巷", 7], [190, 202, 13, "羅斯福路二段77巷", 8],
  [106, 276, 13, "羅斯福路二段81巷", 8], [183, 296, 15, "羅斯福路二段81巷", 8], [259, 320, 0, "羅斯福", 8],
  [85, 280, 55, "羅斯福路二段", 8], [116, 374, 56, "羅斯福路二段", 8], [33, 310, -33, "同安街", 8], [16, 426, 40, "南昌路二段", 8],
  [198, 438, 56, "二段", 8],
];
const food = [[190, 3], [114, 82], [104, 153], [166, 191], [57, 209], [72, 218], [117, 254], [83, 444], [20, 445]];
const shops = [[21, 107], [46, 155], [9, 275], [62, 304], [4, 374], [34, 457], [72, 457]];

const CityMap = () => (
  <MapSvg viewBox="0 0 301 461" preserveAspectRatio="xMidYMin slice">
    <rect width="301" height="461" fill="#e8e8e8" />
    <g fill="#f1f1f1" stroke="#dddddd" strokeWidth=".6">
      <path d="M0 75L24 80L22 95L0 97ZM172 76L220 72L244 74L242 104L172 98ZM279 90L301 84V175L277 170ZM160 150L180 152L194 160L176 200L146 178ZM90 195L130 205L135 235L95 232ZM128 215L182 222L180 245L120 255ZM215 238L268 232L301 240V300L268 308L225 285ZM108 290L138 296L150 320L128 330ZM160 300L210 312L200 345L165 330ZM200 372L250 362L268 400L214 420ZM250 380L301 400V461L255 440ZM0 318L42 316L62 345L22 385L0 370ZM258 30L301 36V55L250 50Z" />
      <path d="M150 150L168 146L184 200M182 150L170 190M140 222L150 255M230 250L300 268M240 238L232 282" fill="none" />
    </g>
    <g fill="#fbe9cf" stroke="#edd3a8" strokeWidth=".7">
      <path d="M20 100L38 96L52 106L50 122L66 150L56 164L30 140ZM36 75L66 73L70 112L42 113ZM82 77L109 75L113 114L86 116ZM52 182L66 172L89 186L86 218L66 226L46 196ZM202 160L234 171L222 214L189 200ZM246 74L264 76L262 114L246 108ZM250 202L274 196L286 224L262 220ZM58 364L96 388L82 430L46 396ZM112 296L138 292L146 310L122 318ZM0 430L26 436L22 461H0ZM206 0L232 0L228 12L206 10ZM182 436L214 430L220 450L196 456ZM155 0H180V10H155Z" />
    </g>
    <path d="M45 86H60L61 102L47 103ZM90 88H104L105 104L92 105Z" fill="#eeeeee" />
    <path d="M0 262L54 264L120 360L80 395L40 320L0 330Z" fill="#d7d9dd" opacity=".8" />
    <g fill="none" stroke="#ffffff" strokeLinecap="round" strokeLinejoin="round">
      <path d="M0 8L60 6L140 10L301 22M0 26L52 47L186 57L272 66L301 72" strokeWidth="15" />
      <path d="M79 50V124L186 136L190 158M156 62L155 128M166 109L219 120L276 118M222 121L216 155M102 275L172 291L262 318L292 325L301 309" strokeWidth="13" />
      <path d="M146 188L259 211L280 220L301 238M0 407L52 459" strokeWidth="12" />
      <path d="M289 74L276 118L249 196L240 206M250 0L262 20" strokeWidth="8" />
      <path d="M79 124L64 163L36 180M64 163L146 188" strokeWidth="6" />
    </g>
    <path d="M0 305L54 278L62 290L0 322Z" fill="#e4e8ec" />
    <path d="M0 130L226 461H150L0 244Z" fill="#fbe79e" />
    <path d="M0 214L50 285L160 461H150L0 244Z" fill="#e2d08a" />
    <g fill="none" stroke="#f0cc6c" strokeWidth="1"><path d="M0 130L226 461M0 170L198 461M0 188L186 461M0 244L150 461" /></g>
    <path d="M0 197L178 461" stroke="#f07a2a" strokeWidth="2.500" />
    <path d="M0 206L120 372" stroke="#4aa84a" strokeWidth="1.300" />
    <g fill="#b5a77c"><path d="M26 188l5 4l-3 1ZM78 262l5 4l-3 1ZM122 328l5 4l-3 1ZM168 394l5 4l-3 1Z" /></g>
    <g fill="none" stroke="#a7b3d6"><path d="M110 52h5M190 58h6M270 65h6" /></g>
    {streets.map(([x, y, r, t, s], i) => (
      <MapText key={i} transform={`translate(${x} ${y}) rotate(${r})`} $size={s}>{t}</MapText>
    ))}
    {places.map(([x, y, t, f], i) => <MapText key={i} x={x} y={y} $fill={f} $weight={500}>{t}</MapText>)}
    {food.map(([x, y], i) => (
      <g key={i}><circle cx={x} cy={y} r="5" fill="#ffffff" /><path d={`M${x - 2} ${y - 3}v6M${x + 2} ${y - 3}v6M${x - 3} ${y - 3}v2h2v-2`} stroke="#f58a2c" fill="none" strokeWidth="1.200" /></g>
    ))}
    {shops.map(([x, y], i) => (
      <g key={i}><circle cx={x} cy={y} r="5" fill="#ffffff" /><path d={`M${x - 3} ${y - 1}h6v4h-6ZM${x - 1.5} ${y - 1}v-2h3v2`} stroke="#6a7bc0" fill="#a9b4dd" /></g>
    ))}
    <g fill="#1eaaf1"><rect x="105" y="66" width="8" height="8" rx="1" /><rect x="34" y="0" width="8" height="5" /><rect x="298" y="84" width="4" height="9" /></g>
    <path d="M106.500 68h5v3h-5Z" fill="#ffffff" />
    <g fill="#3a6fc0"><path d="M2 198h7l-1 6l-2.500 2l-2.500-2ZM144 360h7l-1 6l-2.500 2l-2.500-2Z" /></g>
    <g fill="#8c5a4a"><rect x="3" y="116" width="4" height="4" /><rect x="235" y="92" width="4" height="4" /><rect x="141" y="317" width="4" height="4" /><rect x="163" y="345" width="4" height="4" /></g>
    <MapText x="115" y="449" $size={10} $weight={500}>
      <tspan fill="#4285f4">G</tspan><tspan fill="#ea4335">o</tspan><tspan fill="#fbbc05">o</tspan><tspan fill="#4285f4">g</tspan><tspan fill="#34a853">l</tspan><tspan fill="#ea4335">e</tspan>
    </MapText>
  </MapSvg>
);

const MapScreen = () => (
  <MapBox>
    <CityMap />
    <Search><Input aria-label="搜尋地點" placeholder="搜尋地點" $align="left" $size={12} /><MdSearch size={23} /></Search>
    <Callout>台北市大安區金山南路二段222號</Callout>
    <PinSvg width="26" height="52" viewBox="0 0 26 52">
      <path d="M8 0H18L13 6Z" fill="#ffffff" />
      <path d="M10 28H16L13 50Z" fill={c.blue} />
      <circle cx="13" cy="20" r="10" fill="#ffffff" stroke={c.blue} strokeWidth="3" />
      <svg x="5" y="16" width="16" height="7" viewBox="0 0 70 30"><path d={CAR} fill={c.yellow} /></svg>
    </PinSvg>
    <Locate aria-label="目前位置"><MdGpsFixed size={20} /></Locate>
    <MapAction><Pill><MdCheck size={22} />確定地點</Pill></MapAction>
  </MapBox>
);

/* ---------- app ---------- */

const wide = [329, 328, 323, 330, 324, 320, 326, 331, 304];

export default function App() {
  return (
    <>
      <Global />
      <Board>
        <Lane $tracks={wide} $height={577}>
          <Screen col={5} title="出國預約" low><BookingForm custom /></Screen>
          <Screen col={7} title="選擇時段" overlay={
            <Shade $top={136}>
              <Dialog $height={202}>
                <DialogBody>
                  <Warn $top={29} $size={14} $left={18}>預訂前須先新增付款設定</Warn>
                  <Field $top={21} $h={27} $line={c.blue}>
                    <MdCreditCard size={23} /><Input aria-label="信用卡號碼" placeholder="信用卡號碼" $pale />
                  </Field>
                  <Note>*乘車後收費</Note>
                  <CardTrio top={7} pale />
                </DialogBody>
                <DialogFoot><Choice>取消</Choice><Choice $main>新增</Choice></DialogFoot>
              </Dialog>
            </Shade>
          }><Slots /></Screen>
          <Screen col={8} title="確認資訊">
            <Summary {...confirmProps} slotLabel="預約時段" flight="2016/01/01  第一航廈" action="預約" />
          </Screen>
          <Screen col={9} title="感謝您的搭乘" menu inset low>
            <Body><Center $top={154}>
              <Big $inset>請稍等一下！</Big>
              <Line $top={9} $size={14}>系統忙碌中，將盡快為您處理</Line>
              <Gap $h={45}><Pill $line={c.orange} $size={11}>回上一步</Pill></Gap>
            </Center></Body>
          </Screen>
        </Lane>

        <Lane $tracks={wide} $height={641}>
          <Screen col={1}>
            <Brand top={84} />
            <Center $top={36}>
              <Social $tone="#475993"><Badge $tone="#475993"><FaFacebookF size={16} /></Badge>Facebook登入</Social>
              <Social $tone="#dd4b39" $top={16}><Badge $tone="#dd4b39"><FaGooglePlusG size={18} /></Badge>Google登入</Social>
              <Rule />
              <Pill $line={c.logoBlue} $size={13}>註冊 / 登入</Pill>
            </Center>
          </Screen>
          <Screen col={2}>
            <Brand top={84} />
            <Center $top={32}>
              <Field $thick={2} $h={25} $line="#8ecbe6"><Input aria-label="姓氏" placeholder="姓氏" $pale $size={13} /></Field>
              <Field $top={9} $h={25}><Input aria-label="名字" placeholder="名字" $pale $size={13} /></Field>
              <Field $top={9} $h={25} $thick={2} $line="#e27d80"><Input aria-label="電子信箱" defaultValue="abc123@gmail.com" $size={12} $plain $left={18} /></Field>
              <ErrorText>*此信箱已註冊</ErrorText>
              <Pill $size={13}>註冊 / 登入</Pill>
            </Center>
          </Screen>
          <Screen col={3} title="歡迎您的搭乘" menu overlay={
            <Shade $top={102}>
              <Dialog $height={280}>
                <DialogBody $left={8}>
                  <Gap $h={26}><Big $inset>登入成功<MdTagFaces size={29} /></Big></Gap>
                  <Warn $top={11} $size={11}>建議您新增以下資料以利使用本服務</Warn>
                  <Field $top={15}><Input aria-label="信用卡號碼" placeholder="信用卡號碼" /></Field>
                  <Note>*乘車後收費</Note>
                  <CardTrio top={6} />
                  <Field $top={18}><Input aria-label="手機號碼" placeholder="手機號碼" /></Field>
                  <Note>*接收乘車簡訊用</Note>
                </DialogBody>
                <DialogFoot><Choice>略過</Choice><Choice $main>新增</Choice></DialogFoot>
              </Dialog>
            </Shade>
          }><Brand top={29} /></Screen>
          <Screen col={4} title="歡迎您的搭乘" menu>
            <Brand top={29} />
            <Center $top={36} $left={7}>
              <Pill $line={c.blue} $size={11}><Takeoff width={19} />出國預約</Pill>
              <Gap $h={16}><Pill $line={c.orange} $size={11}><Landing width={19} />回國預約</Pill></Gap>
            </Center>
          </Screen>
          <Screen col={5} title="出國預約"><BookingForm /></Screen>
          <Screen col={6} title="上車地點"><MapScreen /></Screen>
          <Screen col={7} title="選擇時段"><Slots /></Screen>
          <Screen col={8} title="確認資訊">
            <Summary {...confirmProps} slotLabel="乘車時段" action="預約完成" />
          </Screen>
          <Screen col={9} title="感謝您的搭乘" menu inset>
            <Body><Center $top={119}>
              <Big>預約成功<MdTagFaces size={29} /></Big>
              <Line $top={9} $size={14}>將派遣車輛為您服務</Line>
              <MiniLogo><Logo width={60} /><Car width={20} color={c.yellow} /></MiniLogo>
              <Line $top={11} $size={12}>~ 祝您旅途愉快 ~</Line>
              <Gap $h={21}><Pill $line={c.orange} $size={11}><Landing width={19} />回國預約</Pill></Gap>
            </Center></Body>
          </Screen>
        </Lane>

        <Lane $tracks={[329, 328, 323, 330, 324, 320, 338, 320, 303]} $height={592}>
          <Screen col={4}>
            <DrawerArea>
              <Drawer>
                <DrawerTop>
                  <Logo width={131} />
                  <Gap $h={14}><Car width={58} color={c.yellow} /></Gap>
                  <Account href="#account">Daven Huang /登出</Account>
                </DrawerTop>
                <Menu>
                  {menuItems.map(([t, icon, h, on]) => (
                    <li key={t}><MenuLink href="#menu" $h={h} $on={on}><IconSlot>{icon}</IconSlot>{t}</MenuLink></li>
                  ))}
                </Menu>
              </Drawer>
            </DrawerArea>
          </Screen>
          <Screen col={5} title="預約查詢" strong>
            <Body>
              <Caption $h={33}>最新預約</Caption>
              <TripCard out /><TripCard last />
              <Caption $h={30} $ruled>歷史紀錄</Caption>
              <TripCard out /><TripCard last />
            </Body>
          </Screen>
          <Screen col={6} title="帳戶設定" strong>
            <Center $top={10}>
              {account.map(([k, v]) => (
                <Entry key={k}>{k}<EntryInput defaultValue={v} $size={12} $plain /></Entry>
              ))}
            </Center>
          </Screen>
          <Screen col={7} title="付款設定" strong>
            <Center $top={10}>
              <Entry $line={c.blue}>信用卡號碼<EntryInput defaultValue="0012345678910" $size={12} $plain /></Entry>
              <CardTrio top={20} h={26} />
              {[["發票抬頭", 50], ["發票統一編號", 52], ["發票寄送地址", 44]].map(([t, h]) => (
                <Entry key={t} $h={h}><EntryInput aria-label={t} placeholder={t} /></Entry>
              ))}
            </Center>
          </Screen>
          <Screen col={8} title="評價回饋" strong>
            <Body>
              <Review $h={67} $top={17}>
                <ReviewHead><span>2016/12/31 21:00-22:00</span><span>回國</span><Driver>司機姓名</Driver></ReviewHead>
                <Give><MdEdit size={15} />給予評價</Give>
              </Review>
              <Review $h={76} $top={11}>
                <ReviewHead><span>2016/12/31 08:00-09:00</span><span>出國</span><Driver>司機姓名</Driver></ReviewHead>
                <Hearts><MdFavorite size={14} /><MdFavorite size={14} /><MdFavorite size={14} /><MdFavorite size={14} /><MdFavoriteBorder size={14} /></Hearts>
                <Comment>司機大哥好親切,幫忙我提行李</Comment>
              </Review>
            </Body>
          </Screen>
          <Screen col={9} title="其他" strong>
            <Body>
              {["關於我們", "幫助中心", "服務條款", "隱私政策", "版本1.2.1"].map((t, i) => (
                <ListLink key={t} href="#other" $first={i === 0}>{t}</ListLink>
              ))}
            </Body>
          </Screen>
        </Lane>

        <Lane $tracks={[329, 328, 323, 330, 330, 314, 338, 320, 303]} $height={540}>
          <Screen col={5} title="預約資料"><Summary {...detailProps} checked action="取消預約" /></Screen>
          <Screen col={6} title="預約資料"><Summary {...detailProps} people="2" costLabel="費用" cost="$389*2=778" /></Screen>
          <Screen col={8} title="評價回饋" overlay={
            <Shade $full $top={132} $left={32}>
              <Dialog $height={232}>
                <DialogBody>
                  <Gap $h={12}><Driver>司機姓名</Driver></Gap>
                  <Tiny $h={20}>評價</Tiny>
                  <Hearts $flush $gap={2}>{[0, 1, 2, 3, 4].map((i) => <MdFavorite key={i} size={20} />)}</Hearts>
                  <Tiny $h={26}>評論</Tiny>
                  <Area aria-label="評論" />
                </DialogBody>
                <DialogFoot><Choice>取消</Choice><Choice $main>確定</Choice></DialogFoot>
              </Dialog>
            </Shade>
          }>
            <Body>
              <Review $h={76} $top={17}>
                <OldHead>
                  <Driver>司機姓名</Driver>
                  <Hearts $flush $tone="#808080">{[0, 1, 2, 3, 4].map((i) => <MdFavoriteBorder key={i} size={13} />)}</Hearts>
                  <Give $inline><MdEdit size={14} />給予評價</Give>
                </OldHead>
                <Stamp>2016/12/31 08:15</Stamp>
              </Review>
              <Review $h={70} $top={10}>
                <Driver>司機姓名</Driver>
                <Stamp>2016/12/31 08:15</Stamp>
              </Review>
            </Body>
          </Screen>
        </Lane>
      </Board>
    </>
  );
}
